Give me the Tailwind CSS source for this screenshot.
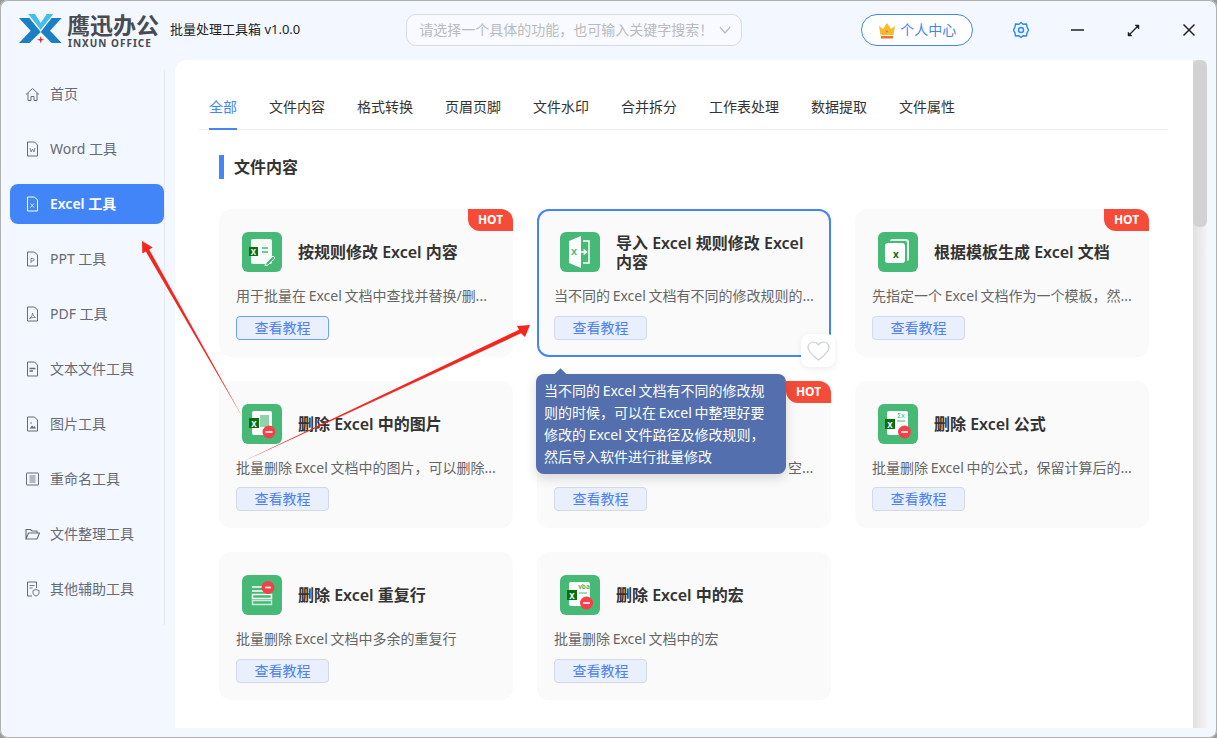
<!DOCTYPE html>
<html lang="zh-CN">
<head>
    <meta charset="UTF-8">
    <title>批量处理工具箱</title>
    <script src="https://cdn.jsdelivr.net/npm/@tailwindcss/browser@4"></script>
</head>
<body class="bg-[#9a9a9a] overflow-hidden font-['Noto_Sans','Noto_Sans_CJK_SC',sans-serif]">
<div class="relative w-[1217px] h-[738px] flex flex-col bg-[#f3f7ff] rounded-lg ring-1 ring-inset ring-[#b0b0b0] overflow-hidden">

    <!-- title bar -->
    <header class="h-[60px] shrink-0 flex items-center">
        <svg class="ml-[18px] shrink-0" width="46" height="36" viewBox="18 12 46 36">
            <polygon points="19,18 29.300,18 40.700,32 29.300,43 19,43 30.700,30.700" fill="#1a7fc4"/>
            <polygon points="61.700,18 51.700,18 40.700,32 51.700,43 61.700,43 50,30.700" fill="#1a7fc4"/>
            <polygon points="28.300,14 35,14 40.700,23 46.700,14 53.300,14 40.700,29.700" fill="#45bfe8"/>
            <polygon points="40.700,36 41.500,39 44.500,39.700 41.500,40.400 40.700,43.500 39.900,40.400 36.900,39.700 39.900,39" fill="#e8262d"/>
        </svg>
        <div class="ml-[3px] w-[103px] h-[33px] flex flex-col">
            <span class="h-[23px] text-[23px] leading-[23px] font-bold text-[#474b52] whitespace-nowrap">鹰迅办公</span>
            <span class="mt-[2px] h-[8px] ml-px text-[10px] leading-[8px] font-bold text-[#474b52] tracking-[1px] whitespace-nowrap">INXUN OFFICE</span>
        </div>
        <span class="text-[13px] text-[#222] whitespace-nowrap">批量处理工具箱 v1.0.0</span>
        <div class="ml-[106px] w-[336px] h-8 shrink-0 flex items-center justify-between pl-3 pr-[10px] rounded-[10px] border border-[#d9dbe0] bg-[#f8faff]">
            <span class="text-sm text-[#b9bbbf] whitespace-nowrap [word-spacing:-1px]">请选择一个具体的功能，也可输入关键字搜索！</span>
            <svg width="12" height="8" viewBox="0 0 12 8" fill="none" stroke="#b9bbbf" stroke-width="1.2"><path d="M1 1l5 6 5-6"/></svg>
        </div>
        <button class="ml-[119px] w-[112px] h-8 shrink-0 flex items-center justify-center gap-1 rounded-full border border-[#4285f8] bg-white text-sm text-[#4285f8]">
            <svg width="18" height="17" viewBox="0 0 18 17"><polygon points="1,4 5,7 9,1 13,7 17,4 15.500,13 2.500,13" fill="#fbb829"/><rect x="3" y="14" width="12" height="2.500" fill="#f0712c"/><circle cx="9" cy="9.500" r="1" fill="#e8762c"/></svg>
            个人中心
        </button>
        <svg class="ml-[40px] shrink-0" width="16" height="18" viewBox="0 0 16 18" fill="none" stroke="#2b8cff" stroke-width="1.500" stroke-linejoin="round"><path d="M8 1.500l2 1.800 3.500-.3 .5 3 1.500 3-1.500 3-.5 3-3.500-.3L8 16.500l-2-1.800-3.500.3-.5-3L.5 9 2 6l.5-3L6 3.300z"/><circle cx="8" cy="9" r="2.500"/></svg>
        <span class="ml-[42px] w-[13px] h-[2px] shrink-0 bg-[#555]"></span>
        <svg class="ml-[43px] shrink-0" width="13" height="13" viewBox="0 0 13 13" stroke="#222" stroke-width="1.300"><path d="M2.500 10.500l8-8" fill="none"/><path d="M8 1h4v4zM1 8v4h4z" fill="#222" stroke-width=".5"/></svg>
        <svg class="ml-[43px] shrink-0" width="12" height="12" viewBox="0 0 12 12" fill="none" stroke="#222" stroke-width="1.500"><path d="M.5.5l11 11M11.500.5l-11 11"/></svg>
    </header>

    <div class="flex h-[668px]">
        <!-- sidebar -->
        <nav class="relative w-[175px] shrink-0 pt-[14px] pl-[10px]">
            <div class="w-[155px] h-[555px] border-r border-[#e6eaf2] flex flex-col gap-[15px] text-sm text-[#666b75] -mt-[4px] pt-[4px]">
                <a class="w-[154px] h-10 shrink-0 flex items-center gap-[10px] pl-[15px] rounded-lg">
                    <svg width="15" height="15" viewBox="0 0 15 15" fill="none" stroke="#666b75"><path d="M1 7.500L7.500 1.500 14 7.500M3 6v7.500h3V9.500h3v4h3V6"/></svg>
                    首页
                </a>
                <a class="w-[154px] h-10 shrink-0 flex items-center gap-[10px] pl-[15px] rounded-lg">
                    <svg width="15" height="16" viewBox="0 0 15 16" fill="none" stroke="#666b75"><path d="M2.500 1h7l3 3v11h-10z"/><path d="M5 7l1 4 1.500-3 1.500 3 1-4" stroke-width=".8"/></svg>
                    Word 工具
                </a>
                <a class="w-[154px] h-10 shrink-0 flex items-center gap-[10px] pl-[15px] rounded-lg bg-[#4285f8] text-white font-semibold">
                    <svg width="15" height="16" viewBox="0 0 15 16" fill="none" stroke="#fff"><path d="M2.500 1h7l3 3v11h-10z"/><path d="M5.500 7.500l3.500 4M9 7.500l-3.500 4" stroke-width=".8"/></svg>
                    Excel 工具
                </a>
                <a class="w-[154px] h-10 shrink-0 flex items-center gap-[10px] pl-[15px] rounded-lg">
                    <svg width="15" height="16" viewBox="0 0 15 16" fill="none" stroke="#666b75"><path d="M2.500 1h7l3 3v11h-10z"/><path d="M6 12V7.500h1.800a1.200 1.200 0 010 2.500H6" stroke-width=".8"/></svg>
                    PPT 工具
                </a>
                <a class="w-[154px] h-10 shrink-0 flex items-center gap-[10px] pl-[15px] rounded-lg">
                    <svg width="15" height="16" viewBox="0 0 15 16" fill="none" stroke="#666b75"><path d="M2.500 1h7l3 3v11h-10z"/><path d="M4.500 12.500c2-1 3-3.500 3-5.500 .500 2.500 1.500 3.500 3 4.500-2.500-.3-4 .2-6 1z" stroke-width=".8"/></svg>
                    PDF 工具
                </a>
                <a class="w-[154px] h-10 shrink-0 flex items-center gap-[10px] pl-[15px] rounded-lg">
                    <svg width="15" height="16" viewBox="0 0 15 16" fill="none" stroke="#666b75"><path d="M2.500 1h7l3 3v11h-10z"/><path d="M4.500 7.500h6M4.500 10h3.500" stroke-width="1.300"/></svg>
                    文本文件工具
                </a>
                <a class="w-[154px] h-10 shrink-0 flex items-center gap-[10px] pl-[15px] rounded-lg">
                    <svg width="15" height="16" viewBox="0 0 15 16" fill="none" stroke="#666b75"><path d="M2.500 1h7l3 3v11h-10z"/><path d="M4.500 12.500l2.500-3 1.500 1.500 1-1 1.500 2.500z" fill="#666b75" stroke="none"/><circle cx="6" cy="7" r=".8" fill="#666b75" stroke="none"/></svg>
                    图片工具
                </a>
                <a class="w-[154px] h-10 shrink-0 flex items-center gap-[10px] pl-[15px] rounded-lg">
                    <svg width="15" height="16" viewBox="0 0 15 16" fill="none" stroke="#666b75"><rect x="1.500" y="2" width="12" height="12" rx=".5"/><path d="M4.500 5h6M4.500 7h6M4.500 9h6M4.500 11h6" stroke-width=".9"/></svg>
                    重命名工具
                </a>
                <a class="w-[154px] h-10 shrink-0 flex items-center gap-[10px] pl-[15px] rounded-lg">
                    <svg width="15" height="16" viewBox="0 0 15 16" fill="none" stroke="#666b75" stroke-width="1.100"><path d="M1 13V3.500h4.500l1.500 1.500h5v2M1 13l2.500-6H14.500L12 13z"/></svg>
                    文件整理工具
                </a>
                <a class="w-[154px] h-10 shrink-0 flex items-center gap-[10px] pl-[15px] rounded-lg">
                    <svg width="15" height="16" viewBox="0 0 15 16" fill="none" stroke="#666b75"><path d="M7 15H2.500V1h9v6"/><path d="M4.500 4.500h5M4.500 7h3" stroke-width=".9"/><path d="M11 8.500l3 1v2.500c0 1.500-1.500 2.500-3 3-1.500-.5-3-1.500-3-3V9.500z" stroke-width=".9"/></svg>
                    其他辅助工具
                </a>
            </div>
        </nav>

        <!-- main panel -->
        <main class="flex flex-1 h-[668px]">
            <div class="w-[1018px] h-full bg-white rounded-tl-xl pl-6 pr-[25px] pt-[37px] overflow-hidden">
                <div class="flex gap-8 pl-[10px] border-b border-[#ebedf2] h-[33px] text-sm text-[#333] whitespace-nowrap">
                    <span class="h-[33px] leading-5 border-b-2 border-[#4285f8] text-[#4285f8]">全部</span>
                    <span class="leading-5">文件内容</span>
                    <span class="leading-5">格式转换</span>
                    <span class="leading-5">页眉页脚</span>
                    <span class="leading-5">文件水印</span>
                    <span class="leading-5">合并拆分</span>
                    <span class="leading-5">工作表处理</span>
                    <span class="leading-5">数据提取</span>
                    <span class="leading-5">文件属性</span>
                </div>

                <div class="mt-[25px] ml-5 flex items-center">
                    <span class="w-[5px] h-6 bg-[#4285f8]"></span>
                    <h2 class="ml-[10px] text-base font-semibold text-[#333]">文件内容</h2>
                </div>

                <div class="mt-[30px] ml-5 grid grid-cols-[294px_294px_294px] auto-rows-[147.6px] gap-6">

                    <div class="relative rounded-xl bg-[#fafafa] pl-[17px] pt-[23px]">
                        <span class="absolute top-0 right-0 w-[45px] h-[22px] flex items-center justify-center rounded-tr-xl rounded-bl-xl bg-[#f54b38] text-xs font-bold text-white">HOT</span>
                        <div class="flex items-center h-10 pl-[6px] gap-4">
                            <svg class="shrink-0" width="40" height="40" viewBox="0 0 40 40"><rect width="40" height="40" rx="6" fill="#45b975"/><rect x="9" y="7" width="21" height="25" rx="2" fill="#fff" opacity=".95"/><rect x="7" y="15" width="9" height="9" fill="#0a6e0a"/><text x="11.500" y="22.500" text-anchor="middle" font-size="8" font-weight="700" fill="#fff">X</text><path d="M20 16h6M20 20h6" stroke="#45b975" stroke-width="1.500"/><path d="M24 31l7-7 2 2-7 7-3 .5z" fill="#45b975" stroke="#fff"/></svg>
                            <h3 class="text-base font-semibold text-[#333] whitespace-nowrap">按规则修改 Excel 内容</h3>
                        </div>
                        <p class="mt-[14px] h-5 text-sm leading-5 text-[#666] whitespace-nowrap [word-spacing:-1px]">用于批量在 Excel 文档中查找并替换/删...</p>
                        <button class="mt-[9.600px] w-[93px] h-6 rounded border border-[#6ea2fa] bg-[#e9effc] text-sm text-[#4f7ff0]">查看教程</button>
                    </div>

                    <div class="relative rounded-xl bg-[#fafafa] ring-2 ring-inset ring-[#4285f8] pl-[17px] pt-[23px]">
                        <div class="flex items-center h-10 pl-[6px] gap-4">
                            <svg class="shrink-0" width="40" height="40" viewBox="0 0 40 40"><rect width="40" height="40" rx="6" fill="#45b975"/><path d="M9 9l12-5v32L9 31z" fill="#fff"/><path d="M23 9h6v22h-6" fill="none" stroke="#fff" stroke-width="1.500"/><text x="14" y="23" text-anchor="middle" font-size="9" font-weight="700" fill="#45b975">X</text><path d="M19 20h7M23.500 17.500L26.500 20l-3 2.500" fill="none" stroke="#fff" stroke-width="1.500"/></svg>
                            <h3 class="w-[200px] pt-[2px] text-base leading-[19px] font-semibold text-[#333]">导入 Excel 规则修改 Excel 内容</h3>
                        </div>
                        <p class="mt-[14px] h-5 text-sm leading-5 text-[#666] whitespace-nowrap [word-spacing:-1px]">当不同的 Excel 文档有不同的修改规则的...</p>
                        <button class="mt-[9.600px] w-[93px] h-6 rounded border border-[#d5d9e4] bg-[#e9effc] text-sm text-[#4f7ff0]">查看教程</button>
                        <span class="absolute left-[264px] top-[125px] w-[34px] h-[33px] flex items-center justify-center rounded-lg bg-white shadow-[0_2px_6px_rgba(0,0,0,0.08)]">
                            <svg width="23" height="20" viewBox="0 0 23 20" fill="none" stroke="#c9d0d6" stroke-width="1.200"><path d="M11.500 19C5 14 1 10.500 1 6.500 1 3.300 3.500 1 6.300 1c2.200 0 4 1.100 5.200 3 1.200-1.900 3-3 5.200-3C19.500 1 22 3.300 22 6.500c0 4-4 7.500-10.500 12.500z"/></svg>
                        </span>
                    </div>

                    <div class="relative rounded-xl bg-[#fafafa] pl-[17px] pt-[23px]">
                        <span class="absolute top-0 right-0 w-[45px] h-[22px] flex items-center justify-center rounded-tr-xl rounded-bl-xl bg-[#f54b38] text-xs font-bold text-white">HOT</span>
                        <div class="flex items-center h-10 pl-[6px] gap-4">
                            <svg class="shrink-0" width="40" height="40" viewBox="0 0 40 40"><rect width="40" height="40" rx="6" fill="#45b975"/><path d="M12 9a2 2 0 012-2h14a3 3 0 013 3v17a2 2 0 01-2 2V11a2 2 0 00-2-2z" fill="#fff" opacity=".85"/><rect x="7" y="11" width="20" height="20" rx="3" fill="#fff"/><text x="18" y="26" text-anchor="middle" font-size="10" font-weight="700" fill="#0a6e0a">x</text></svg>
                            <h3 class="text-base font-semibold text-[#333] whitespace-nowrap">根据模板生成 Excel 文档</h3>
                        </div>
                        <p class="mt-[14px] h-5 text-sm leading-5 text-[#666] whitespace-nowrap [word-spacing:-1px]">先指定一个 Excel 文档作为一个模板，然...</p>
                        <button class="mt-[9.600px] w-[93px] h-6 rounded border border-[#d5d9e4] bg-[#e9effc] text-sm text-[#4f7ff0]">查看教程</button>
                    </div>

                    <div class="relative rounded-xl bg-[#fafafa] pl-[17px] pt-[23px]">
                        <div class="flex items-center h-10 pl-[6px] gap-4">
                            <svg class="shrink-0" width="40" height="40" viewBox="0 0 40 40"><rect width="40" height="40" rx="6" fill="#45b975"/><rect x="10" y="7" width="20" height="24" rx="2" fill="#fff"/><rect x="7" y="14" width="10" height="10" fill="#0a6e0a"/><text x="12" y="22.500" text-anchor="middle" font-size="8" font-weight="700" fill="#fff">X</text><path d="M18 11h9v12h-9z" fill="#8fd3ab"/><circle cx="27" cy="28" r="6.500" fill="#f5404a"/><path d="M23.500 28h7" stroke="#fff" stroke-width="1.600"/></svg>
                            <h3 class="text-base font-semibold text-[#333] whitespace-nowrap">删除 Excel 中的图片</h3>
                        </div>
                        <p class="mt-[14px] h-5 text-sm leading-5 text-[#666] whitespace-nowrap [word-spacing:-1px]">批量删除 Excel 文档中的图片，可以删除...</p>
                        <button class="mt-[9.600px] w-[93px] h-6 rounded border border-[#d5d9e4] bg-[#e9effc] text-sm text-[#4f7ff0]">查看教程</button>
                    </div>

                    <div class="relative rounded-xl bg-[#fafafa] pl-[17px] pt-[23px]">
                        <span class="absolute top-0 right-0 w-[45px] h-[22px] flex items-center justify-center rounded-tr-xl rounded-bl-xl bg-[#f54b38] text-xs font-bold text-white">HOT</span>
                        <div class="flex items-center h-10 pl-[6px] gap-4">
                            <svg class="shrink-0" width="40" height="40" viewBox="0 0 40 40"><rect width="40" height="40" rx="6" fill="#45b975"/></svg>
                        </div>
                        <p class="mt-[14px] h-5 pl-[234px] text-sm leading-5 text-[#666] whitespace-nowrap">空...</p>
                        <button class="mt-[9.600px] w-[93px] h-6 rounded border border-[#d5d9e4] bg-[#e9effc] text-sm text-[#4f7ff0]">查看教程</button>
                    </div>

                    <div class="relative rounded-xl bg-[#fafafa] pl-[17px] pt-[23px]">
                        <div class="flex items-center h-10 pl-[6px] gap-4">
                            <svg class="shrink-0" width="40" height="40" viewBox="0 0 40 40"><rect width="40" height="40" rx="6" fill="#45b975"/><rect x="9" y="7" width="21" height="24" rx="2" fill="#fff"/><rect x="7" y="15" width="10" height="10" fill="#0a6e0a"/><text x="12" y="23.500" text-anchor="middle" font-size="8" font-weight="700" fill="#fff">X</text><text x="23" y="14" text-anchor="middle" font-size="7" fill="#45b975">Σx</text><path d="M19 17h8" stroke="#45b975"/><circle cx="26.500" cy="28" r="6.500" fill="#f5404a"/><path d="M23 28h7" stroke="#fff" stroke-width="1.600"/></svg>
                            <h3 class="text-base font-semibold text-[#333] whitespace-nowrap">删除 Excel 公式</h3>
                        </div>
                        <p class="mt-[14px] h-5 text-sm leading-5 text-[#666] whitespace-nowrap [word-spacing:-1px]">批量删除 Excel 中的公式，保留计算后的...</p>
                        <button class="mt-[9.600px] w-[93px] h-6 rounded border border-[#d5d9e4] bg-[#e9effc] text-sm text-[#4f7ff0]">查看教程</button>
                    </div>

                    <div class="relative rounded-xl bg-[#fafafa] pl-[17px] pt-[23px]">
                        <div class="flex items-center h-10 pl-[6px] gap-4">
                            <svg class="shrink-0" width="40" height="40" viewBox="0 0 40 40"><rect width="40" height="40" rx="6" fill="#45b975"/><path d="M10 12h13M10 16h13" stroke="#fff" stroke-width="1.600"/><rect x="10.500" y="19.500" width="19" height="4" fill="none" stroke="#fff" stroke-width="1.500"/><rect x="10.500" y="25.500" width="19" height="4" fill="none" stroke="#c8ecd6" stroke-width="1.500"/><circle cx="26" cy="12.500" r="6.500" fill="#f5404a"/><path d="M23 12.500h6" stroke="#fff" stroke-width="1.600"/></svg>
                            <h3 class="text-base font-semibold text-[#333] whitespace-nowrap">删除 Excel 重复行</h3>
                        </div>
                        <p class="mt-[14px] h-5 text-sm leading-5 text-[#666] whitespace-nowrap [word-spacing:-1px]">批量删除 Excel 文档中多余的重复行</p>
                        <button class="mt-[9.600px] w-[93px] h-6 rounded border border-[#d5d9e4] bg-[#e9effc] text-sm text-[#4f7ff0]">查看教程</button>
                    </div>

                    <div class="relative rounded-xl bg-[#fafafa] pl-[17px] pt-[23px]">
                        <div class="flex items-center h-10 pl-[6px] gap-4">
                            <svg class="shrink-0" width="40" height="40" viewBox="0 0 40 40"><rect width="40" height="40" rx="6" fill="#45b975"/><rect x="9" y="7" width="21" height="24" rx="2" fill="#fff"/><rect x="7" y="15" width="10" height="10" fill="#0a6e0a"/><text x="12" y="23.500" text-anchor="middle" font-size="8" font-weight="700" fill="#fff">X</text><text x="24" y="14" text-anchor="middle" font-size="6.500" font-weight="700" fill="#45b975">vba</text><path d="M19 18h8" stroke="#45b975"/><circle cx="26.500" cy="28" r="6.500" fill="#f5404a"/><path d="M23 28h7" stroke="#fff" stroke-width="1.600"/></svg>
                            <h3 class="text-base font-semibold text-[#333] whitespace-nowrap">删除 Excel 中的宏</h3>
                        </div>
                        <p class="mt-[14px] h-5 text-sm leading-5 text-[#666] whitespace-nowrap [word-spacing:-1px]">批量删除 Excel 文档中的宏</p>
                        <button class="mt-[9.600px] w-[93px] h-6 rounded border border-[#d5d9e4] bg-[#e9effc] text-sm text-[#4f7ff0]">查看教程</button>
                    </div>
                </div>
            </div>

            <!-- scrollbar -->
            <div class="w-[14px] h-full bg-gradient-to-r from-[#e0e0e0] to-[#f4f4f4]">
                <div class="h-[167px] rounded-md bg-[#d2d2d2]"></div>
            </div>
        </main>
    </div>

    <!-- tooltip over the second card -->
    <div class="absolute left-[536px] top-[374px] w-[250px] h-[100px] rounded-lg bg-[#536fad] px-2 pt-[6px] text-sm leading-[22px] text-white [word-spacing:-1px] shadow-[0_4px_12px_rgba(0,0,0,0.15)]">
        <span class="absolute left-[20px] -top-[4px] w-[9px] h-[9px] rotate-45 bg-[#536fad]"></span>
        当不同的 Excel 文档有不同的修改规则的时候，可以在 Excel 中整理好要修改的 Excel 文件路径及修改规则，然后导入软件进行批量修改
    </div>

    <!-- red annotation arrows -->
    <svg class="absolute left-0 top-0 pointer-events-none" width="1217" height="738" viewBox="0 0 1217 738">
        <polygon points="243,418 149.200,249.500 152.700,247.500 142,241 142.300,253.500 145.800,251.500" fill="#f5261d"/>
        <polygon points="240,463 519,329.700 517,326 530,325 525,337 521,333.300" fill="#f5261d"/>
    </svg>
</div>
</body>
</html>
